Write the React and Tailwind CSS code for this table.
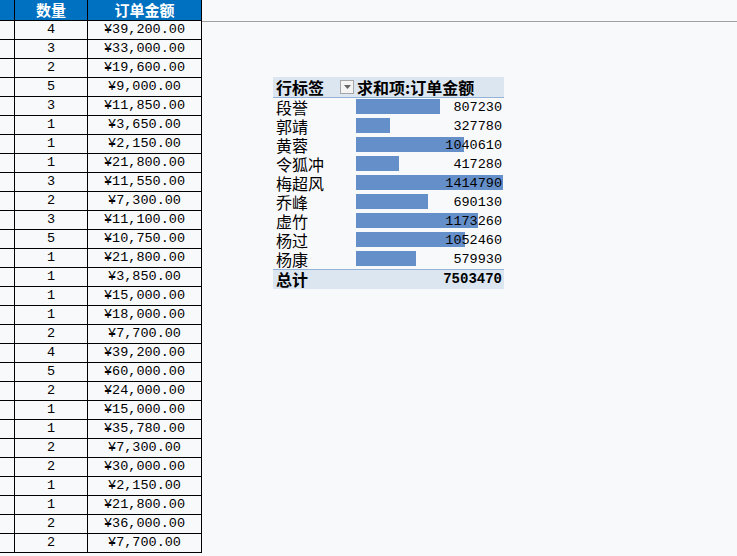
import React from 'react';

const rows = [
  [4, '¥39,200.00'], [3, '¥33,000.00'], [2, '¥19,600.00'], [5, '¥9,000.00'],
  [3, '¥11,850.00'], [1, '¥3,650.00'], [1, '¥2,150.00'], [1, '¥21,800.00'],
  [3, '¥11,550.00'], [2, '¥7,300.00'], [3, '¥11,100.00'], [5, '¥10,750.00'],
  [1, '¥21,800.00'], [1, '¥3,850.00'], [1, '¥15,000.00'], [1, '¥18,000.00'],
  [2, '¥7,700.00'], [4, '¥39,200.00'], [5, '¥60,000.00'], [2, '¥24,000.00'],
  [1, '¥15,000.00'], [1, '¥35,780.00'], [2, '¥7,300.00'], [2, '¥30,000.00'],
  [1, '¥2,150.00'], [1, '¥21,800.00'], [2, '¥36,000.00'], [2, '¥7,700.00'],
];

const pivot = [
  ['段誉', 807230], ['郭靖', 327780], ['黄蓉', 1040610], ['令狐冲', 417280],
  ['梅超风', 1414790], ['乔峰', 690130], ['虚竹', 1173260], ['杨过', 1052460],
  ['杨康', 579930],
];

const max = 1414790;
const cjk = { fontFamily: '"Noto Sans CJK SC", sans-serif' };
const mono = { fontFamily: '"Liberation Mono", "Noto Sans CJK SC", monospace' };

export default function App() {
  return (
    <div className="w-[737px] h-[556px] overflow-hidden bg-[#f8f9fb] flex text-black">
      {/* source table */}
      <div className="w-[202px] shrink-0">
        <div className="flex h-[21px] bg-[#0070c0] border-b border-black text-white font-bold text-[15px] leading-[20px]" style={cjk}>
          <div className="w-[15px] border-r border-black" />
          <div className="w-[73px] border-r border-black text-center">数量</div>
          <div className="w-[114px] border-r border-black text-center">订单金额</div>
        </div>
        {rows.map(([q, amt], i) => (
          <div key={i} className="flex h-[19px] border-b border-black text-[13.5px] leading-[18px]" style={mono}>
            <div className="w-[15px] border-r border-black" />
            <div className="w-[73px] border-r border-black text-center">{q}</div>
            <div className="w-[114px] border-r border-black text-center">{amt}</div>
          </div>
        ))}
      </div>

      {/* right side */}
      <div className="flex-1">
        <div className="h-[22px] border-b border-[#a0a0a0]" />
        <div className="ml-[71px] mt-[55px] w-[231px]">
          {/* header */}
          <div className="flex h-[21px] bg-[#dce6f1] border-b border-[#95b3d7] text-[16px] font-bold leading-[20px]" style={cjk}>
            <div className="w-[83px] pl-[3px] flex items-center justify-between pr-[1px]">
              <span>行标签</span>
              <span className="w-[14px] h-[14px] mr-[1px] border border-[#a6a6a6] bg-[#f4f4f4] flex items-center justify-center">
                <svg width="7" height="4" viewBox="0 0 7 4"><path d="M0 0h7L3.5 4z" fill="#666" /></svg>
              </span>
            </div>
            <div className="flex-1 pl-[1px] whitespace-nowrap">求和项:订单金额</div>
          </div>
          {/* data rows */}
          {pivot.map(([name, v]) => (
            <div key={name} className="flex h-[19px]">
              <div className="w-[83px] pl-[3px] text-[16px] leading-[19px]" style={cjk}>{name}</div>
              <div className="flex-1 relative">
                <div
                  className="absolute left-0 top-[1px] h-[15px] bg-[#658fc9]"
                  style={{ width: `${(v / max) * 147}px` }}
                />
                <div className="relative text-right pr-[2px] text-[13.5px] leading-[19px]" style={mono}>{v}</div>
              </div>
            </div>
          ))}
          {/* total */}
          <div className="flex h-[20px] bg-[#dce6f1] border-t border-[#95b3d7] font-bold">
            <div className="w-[83px] pl-[3px] text-[16px] leading-[19px]" style={cjk}>总计</div>
            <div className="flex-1 text-right pr-[2px] text-[14px] leading-[19px]" style={mono}>7503470</div>
          </div>
        </div>
      </div>
    </div>
  );
}
